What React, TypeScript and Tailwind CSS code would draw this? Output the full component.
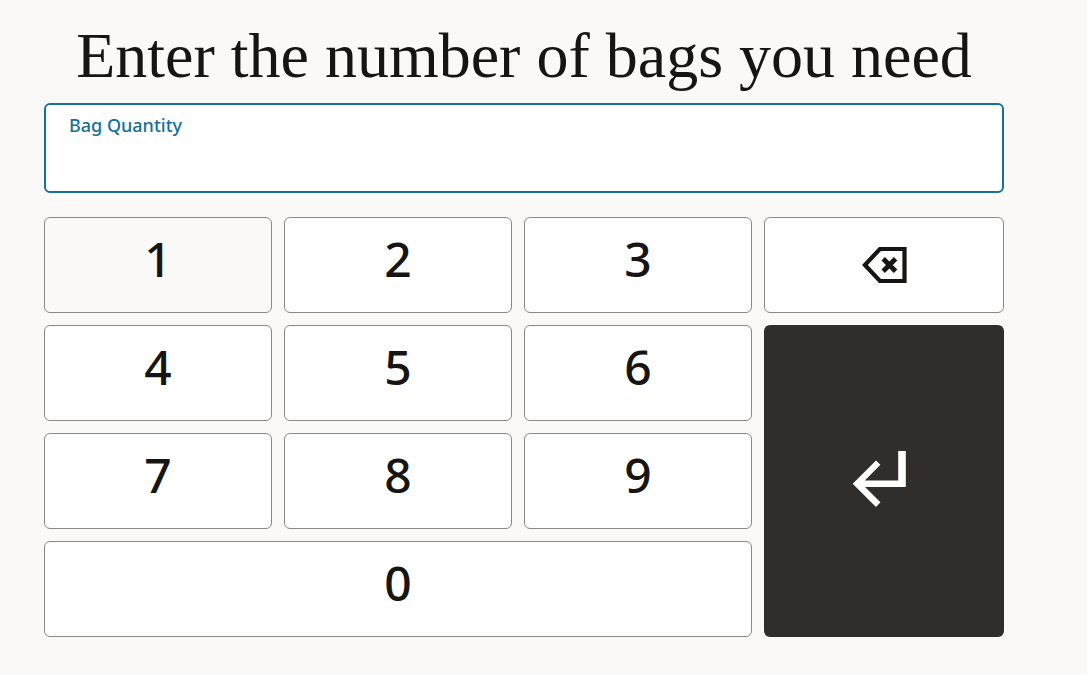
import { useState } from "react";

const topDigits = ["1", "2", "3"];
const lowerDigits = ["4", "5", "6", "7", "8", "9"];

function DigitKey({
  digit,
  onPress,
  className = "bg-white",
}: {
  digit: string;
  onPress: (digit: string) => void;
  className?: string;
}) {
  return (
    <button
      type="button"
      onClick={() => onPress(digit)}
      className={`h-24 cursor-pointer rounded-md border border-[#8b8885] pb-3 text-5xl leading-none font-medium ${className}`}
    >
      {digit}
    </button>
  );
}

function BackspaceIcon() {
  return (
    <svg viewBox="0 0 48 48" className="size-12" fill="none" stroke="currentColor" strokeWidth="4" aria-hidden="true">
      <path d="M19.9 8H44.5V40H19.9L4.9 24Z" strokeWidth="4.2" />
      <path d="M23.2 17.8L35.6 30.2M35.6 17.8L23.2 30.2" strokeWidth="4.8" />
    </svg>
  );
}

function EnterIcon() {
  return (
    <svg viewBox="0 0 72 72" className="size-18" fill="currentColor" aria-hidden="true">
      <path d="M50.2 6H57.8V42H17L32.4 57.3L28 62L4.7 38.8L28 15.4L32.4 19.8L16.8 35.6H50.2Z" />
    </svg>
  );
}

export default function App() {
  const [quantity, setQuantity] = useState("");
  const press = (digit: string) => setQuantity((value) => value + digit);

  return (
    <main className="min-h-screen bg-[#fbf9f8] pt-6 pr-[83px] pb-6 pl-11 font-['Noto_Sans','Open_Sans',sans-serif] text-[#161513]">
      <h1 className="text-center font-['Georgia','Liberation_Serif',serif] text-[64px] leading-[63px] whitespace-nowrap">
        Enter the number of bags you need
      </h1>

      <form onSubmit={(event) => event.preventDefault()} className="mt-4">
        <div className="flex h-[90px] flex-col rounded-md border-2 border-[#13719b] bg-white px-[23px] pt-2">
          <label htmlFor="bag-quantity" className="text-lg leading-6 font-medium text-[#13719b]">
            Bag Quantity
          </label>
          <input
            id="bag-quantity"
            inputMode="numeric"
            autoComplete="off"
            value={quantity}
            onChange={(event) => setQuantity(event.target.value.replace(/\D/g, ""))}
            className="w-full flex-1 bg-transparent text-3xl outline-none"
          />
        </div>

        <div className="mt-6 grid grid-cols-[19fr_19fr_19fr_20fr] gap-3">
          {topDigits.map((digit) => (
            <DigitKey
              key={digit}
              digit={digit}
              onPress={press}
              className={digit === "1" ? "bg-[#fbf9f8]" : "bg-white"}
            />
          ))}
          <button
            type="button"
            aria-label="Delete last digit"
            onClick={() => setQuantity((value) => value.slice(0, -1))}
            className="flex cursor-pointer items-center justify-center rounded-md border border-[#8b8885] bg-white"
          >
            <BackspaceIcon />
          </button>
          <button
            type="submit"
            aria-label="Enter"
            className="col-start-4 row-span-3 row-start-2 flex cursor-pointer items-center justify-center rounded-md bg-[#312d2a] text-white"
          >
            <EnterIcon />
          </button>
          {lowerDigits.map((digit) => (
            <DigitKey key={digit} digit={digit} onPress={press} />
          ))}
          <DigitKey digit="0" onPress={press} className="col-span-3 bg-white" />
        </div>
      </form>
    </main>
  );
}
